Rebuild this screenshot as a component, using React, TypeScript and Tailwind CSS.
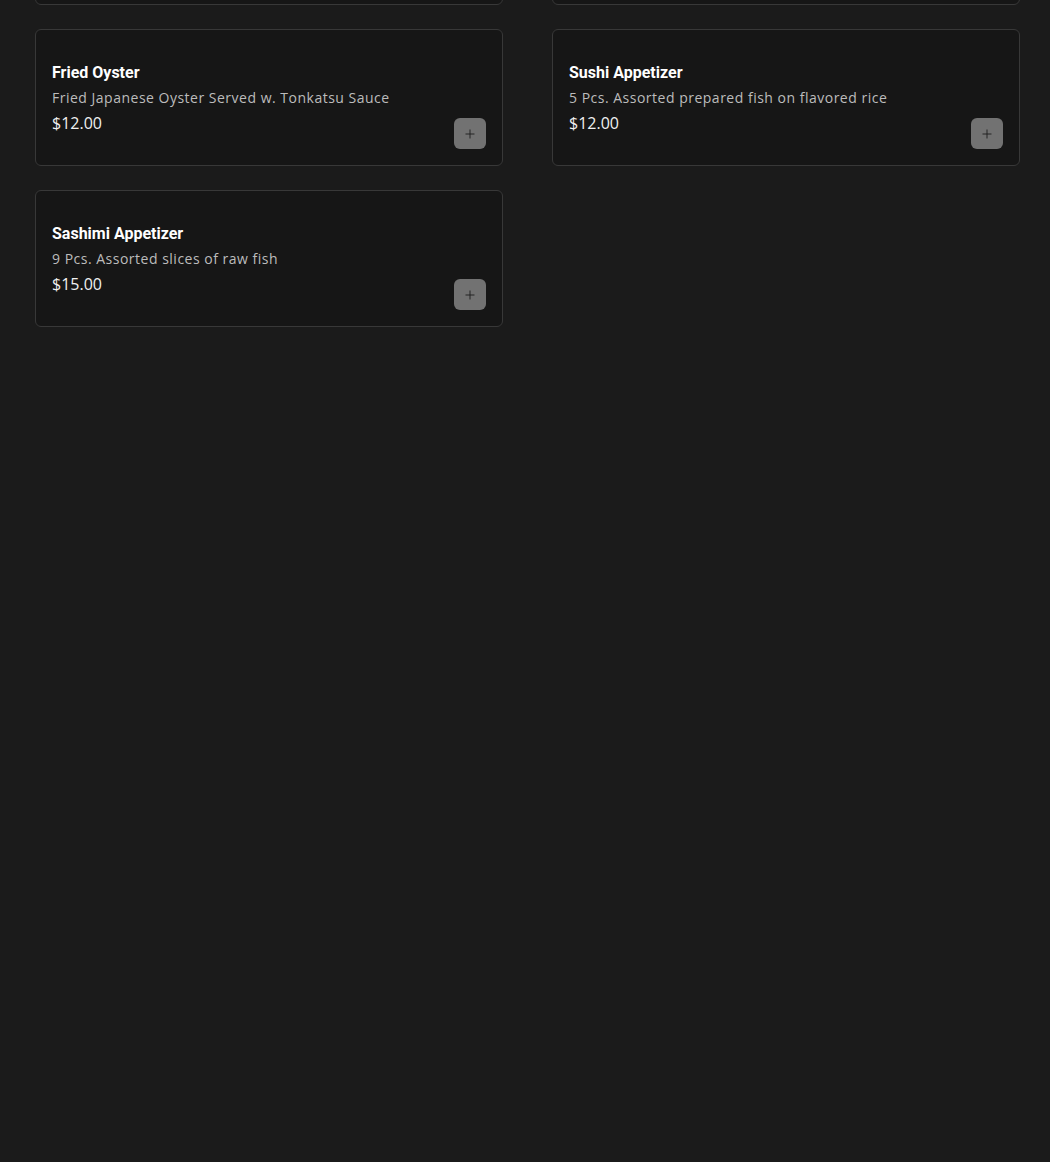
import { Plus } from "lucide-react";

type Item = {
  name: string;
  desc: string;
  price: string;
};

const rows: Item[][] = [
  [
    {
      name: "Shrimp Tempura",
      desc: "3 Pcs. Shrimp & vegetables fried in light batter",
      price: "$10.00",
    },
    {
      name: "Soft Shell Crab",
      desc: "Deep fried soft shell crab w. ponzu sauce",
      price: "$12.00",
    },
  ],
  [
    {
      name: "Fried Oyster",
      desc: "Fried Japanese Oyster Served w. Tonkatsu Sauce",
      price: "$12.00",
    },
    {
      name: "Sushi Appetizer",
      desc: "5 Pcs. Assorted prepared fish on flavored rice",
      price: "$12.00",
    },
  ],
  [
    {
      name: "Sashimi Appetizer",
      desc: "9 Pcs. Assorted slices of raw fish",
      price: "$15.00",
    },
  ],
];

const MenuCard = ({ item }: { item: Item }) => (
  <div className="flex h-[137px] justify-between rounded-md border border-[#383838] bg-[#161616] px-4 pb-4 pt-[31px]">
    <div className="flex flex-col">
      <h3 className="font-['Roboto',sans-serif] text-base font-bold leading-6 text-white">
        {item.name}
      </h3>
      <p className="mt-[1px] font-['Open_Sans',sans-serif] text-sm leading-6 tracking-[0.5px] text-[#bcbcbc]">
        {item.desc}
      </p>
      <span className="mt-[1px] font-['Open_Sans',sans-serif] text-base leading-6 text-[#f0f0f0]">
        {item.price}
      </span>
    </div>
    <button className="flex h-[31px] w-[32px] items-center justify-center self-end rounded-md bg-[#727272]">
      <Plus size={14} strokeWidth={1.6} className="text-[#1e1e1e]" />
    </button>
  </div>
);

export default function App() {
  return (
    <div className="min-h-[1162px] overflow-hidden bg-[#1b1b1b]">
      <div className="-mt-[132px] flex flex-col gap-6 pl-[35px] pr-[30px]">
        {rows.map((row, i) => (
          <div key={i} className="grid grid-cols-2 gap-x-[49px]">
            {row.map((item) => (
              <MenuCard key={item.name} item={item} />
            ))}
          </div>
        ))}
      </div>
    </div>
  );
}
